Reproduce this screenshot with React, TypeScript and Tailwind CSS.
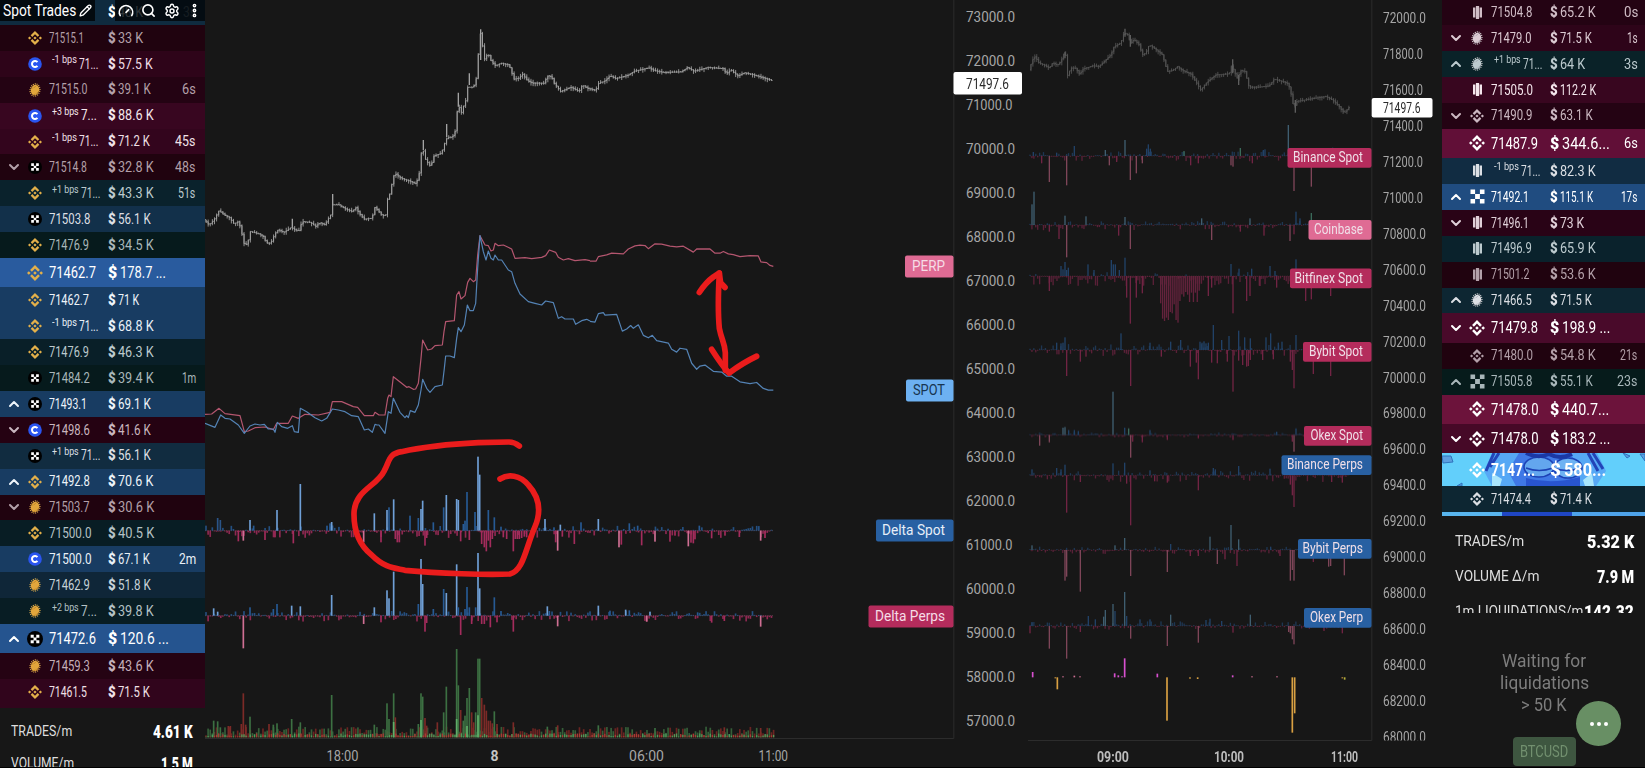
import { useLayoutEffect, useRef } from 'react';
import { ChevronDown, ChevronUp, EllipsisVertical, Gauge, Pencil, Search, Settings } from 'lucide-react';
import { SiBinance } from 'react-icons/si';

type Exchange = 'binance' | 'coinbase' | 'bitfinex' | 'okx' | 'bybit';
type Size = 'sm' | 'md' | 'xl';

interface Trade {
  ex: Exchange;
  price: string;
  amount: string;
  bg: string;
  tone?: string;
  bps?: string;
  time?: string;
  dir?: 'up' | 'down';
  size?: Size;
}

// [x, height, tone]
type Bar = [number, number, string?];

const FONT = 'Roboto, "Open Sans", sans-serif';

const ADVANCE: Record<string, number> = { '1': 4, '7': 6, '0': 7.6, '.': 3.2, ' ': 3.2, K: 8, s: 6.6, m: 10.5 };
const measure = (text: string) => [...text].reduce((sum, c) => sum + (ADVANCE[c] ?? 7), 0);

function Fit({ text, w, className = '' }: { text: string; w: number; className?: string }) {
  const ref = useRef<HTMLSpanElement>(null);

  useLayoutEffect(() => {
    const el = ref.current;
    if (el) el.style.transform = `scaleX(${w / el.offsetWidth})`;
  }, [text, w]);

  return (
    <span className={`inline-block shrink-0 ${className}`} style={{ width: w }}>
      <span ref={ref} className="inline-block origin-left whitespace-nowrap">
        {text}
      </span>
    </span>
  );
}

function ExchangeIcon({ ex, mono, big }: { ex: Exchange; mono: boolean; big: boolean }) {
  const size = big ? 16 : 14;
  if (ex === 'binance') return <SiBinance size={size} color={mono ? 'currentColor' : '#e3b04a'} />;
  if (ex === 'coinbase') {
    return (
      <svg width="14" height="14" viewBox="0 0 14 14">
        <circle cx="7" cy="7" r="6.8" fill="#2a55f0" />
        <path d="M9.4 5.2A3 3 0 1 0 9.4 8.8" fill="none" stroke="#fff" strokeWidth="2" />
      </svg>
    );
  }
  if (ex === 'bybit') {
    return (
      <svg width="11" height="15" viewBox="0 0 11 15" fill="currentColor">
        <rect x="1" y="2.5" width="2.4" height="10" />
        <rect x="3.9" y="1" width="3.2" height="13" />
        <rect x="7.6" y="2.5" width="2.4" height="10" />
      </svg>
    );
  }
  if (ex === 'bitfinex') {
    return (
      <svg width="12" height="14" viewBox="0 0 12 14">
        <ellipse cx="6" cy="7" rx="4.2" ry="5.4" transform="rotate(12 6 7)" fill={mono ? 'currentColor' : '#e2a63c'} />
        <ellipse cx="6" cy="7" rx="4.9" ry="6.2" transform="rotate(12 6 7)" fill="none" stroke={mono ? '#d8d8d8' : '#e8b552'} strokeWidth="1.1" strokeDasharray="1 1" />
        <path d="M1.8 5.2C4 5.4 6.5 4 8 2" fill="none" stroke={mono ? '#8d8d98' : '#a06c1c'} strokeWidth=".6" strokeDasharray="1 .6" />
        <path d="M3.6 12C6.5 11.4 9 9.6 10.4 7.4" fill="none" stroke={mono ? '#8d8d98' : '#a06c1c'} strokeWidth=".7" strokeDasharray="1 .6" />
      </svg>
    );
  }
  return mono ? (
    <svg width="15" height="15" viewBox="0 0 15 15" fill="currentColor">
      <path d="M.5.5h4.6v4.6H.5zM9.9.5h4.6v4.6H9.9zM5.1 5.1h4.8v4.8H5.1zM.5 9.9h4.6v4.6H.5zM9.9 9.9h4.6v4.6H9.9z" />
    </svg>
  ) : (
    <svg width={size} height={size} viewBox="0 0 14 14">
      <circle cx="7" cy="7" r="7" fill="#000" />
      <path d="M3.2 3.2h2.7v2.7H3.2zM8.1 3.2h2.7v2.7H8.1zM5.7 5.7h2.6v2.6H5.7zM3.2 8.1h2.7v2.7H3.2zM8.1 8.1h2.7v2.7H8.1z" fill="#fff" />
    </svg>
  );
}

const rowStyles: Record<Size, string> = {
  sm: 'h-[25.9px] text-[15px]',
  md: 'h-[29.4px] text-[17px]',
  xl: 'h-[33px] text-[19px] font-bold',
};
const scales: Record<Size, number> = { sm: 1, md: 1.17, xl: 1.35 };

// blue cartoon strip shown behind very large trades
function WhaleArt() {
  return (
    <svg className="absolute inset-0" width="203" height="33" viewBox="0 0 203 33" preserveAspectRatio="none">
      <rect width="203" height="33" fill="#62cffb" />
      <path d="M50 0L42 18L50 33H154L164 18L155 0Z" fill="#56a8f5" />
      <path d="M52 0L44 18M57 0L48 14M151 0L161 16M146 0L156 18" stroke="#2244b8" strokeWidth="3" />
      <path d="M77 0H128L140 18L134 33H74L66 18Z" fill="#3f78e6" />
      <path d="M50 20L60 26L58 33H50ZM150 20L141 27L143 33H152Z" fill="#a9e6fc" />
      <ellipse cx="97" cy="14" rx="15" ry="10" fill="#63a6ee" stroke="#1c41b5" strokeWidth="1.6" />
      <ellipse cx="126" cy="15" rx="14" ry="10" fill="#6db2f3" stroke="#1c41b5" strokeWidth="1.6" />
      <path d="M84 15Q97 20 111 15Q125 20 139 15" fill="none" stroke="#1c41b5" strokeWidth="1.5" />
      <path d="M84 0Q96 6 107 1Q118 7 130 1" fill="none" stroke="#1b38a5" strokeWidth="4" />
      <path d="M84 25Q110 32 138 24V33H84Z" fill="#2855d0" />
      <path d="M0 3H9L11 9L1 10ZM15 33L20 30V33ZM181 0L188 3L185 5ZM198 1H203V8Z" fill="#5b9fe0" stroke="#2f74bd" strokeWidth="1" />
    </svg>
  );
}

function TradeRow({ trade, mono }: { trade: Trade; mono: boolean }) {
  const size = trade.size ?? 'sm';
  const k = scales[size];
  return (
    <div className={`relative flex shrink-0 items-center pl-2 ${rowStyles[size]} ${trade.bg} ${trade.tone ?? 'text-[#dcdfe4]'}`}>
      {size === 'xl' && <WhaleArt />}
      <div className="relative flex w-full items-center">
        <div className="mr-0.5 flex w-[11px] justify-center">
          {trade.dir === 'up' && <ChevronUp size={16} strokeWidth={3} className="shrink-0" />}
          {trade.dir === 'down' && <ChevronDown size={16} strokeWidth={3} className="shrink-0" />}
        </div>
        <div className="flex w-7 justify-center">
          <ExchangeIcon ex={trade.ex} mono={mono} big={size !== 'sm'} />
        </div>
        <div className="flex w-[59px] items-center">
          {trade.bps && (
            <Fit text={trade.bps} w={trade.bps[0] === '-' ? 25 : 26.5} className="mr-0.5 ml-[3px] -translate-y-[4px] text-[11px] leading-none" />
          )}
          <Fit text={trade.price} w={measure(trade.price) * k} />
        </div>
        <Fit text="$" w={8 * k} className={size === 'sm' ? 'mr-0.5 font-black' : 'mr-[3px] font-black'} />
        <Fit text={trade.amount} w={measure(trade.amount) * k} />
        {trade.time && (
          <div className={`flex flex-1 justify-end ${mono ? 'pr-[7px]' : 'pr-[9px]'}`}>
            <Fit text={trade.time} w={measure(trade.time)} className="text-[15px]" />
          </div>
        )}
      </div>
    </div>
  );
}

const DIM_RED = 'bg-[#20030f]';
const RED = 'bg-[#2e0419]';
const DIM_TEAL = 'bg-[#061a1c]';
const TEAL = 'bg-[#0a222c]';
const NAVY = 'bg-[#12304a]';
const BLUE = 'bg-[#183c62]';
const FADED_RED = 'text-[#b3a0a9]';
const FADED = 'text-[#a9b7ba]';
const WHITE = 'text-white';

const spotTrades: Trade[] = [
  { ex: 'binance', price: '71515.1', amount: '33 K', bg: DIM_RED, tone: FADED_RED },
  { ex: 'coinbase', price: '71...', bps: '-1 bps', amount: '57.5 K', bg: RED, tone: 'text-[#eedde5]' },
  { ex: 'bitfinex', price: '71515.0', amount: '39.1 K', time: '6s', bg: 'bg-[#240313]', tone: FADED_RED },
  { ex: 'coinbase', price: '7...', bps: '+3 bps', amount: '88.6 K', bg: 'bg-[#380620]', tone: 'text-[#f4e6ec]' },
  { ex: 'binance', price: '71...', bps: '-1 bps', amount: '71.2 K', time: '45s', bg: 'bg-[#33051d]', tone: 'text-[#f0e0e7]' },
  { ex: 'okx', price: '71514.8', amount: '32.8 K', time: '48s', dir: 'down', bg: DIM_RED, tone: FADED_RED },
  { ex: 'binance', price: '71...', bps: '+1 bps', amount: '43.3 K', time: '51s', bg: TEAL, tone: 'text-[#bccace]' },
  { ex: 'okx', price: '71503.8', amount: '56.1 K', bg: NAVY },
  { ex: 'binance', price: '71476.9', amount: '34.5 K', bg: DIM_TEAL, tone: FADED },
  { ex: 'binance', price: '71462.7', amount: '178.7 ...', bg: 'bg-[#295b9e]', tone: WHITE, size: 'md' },
  { ex: 'binance', price: '71462.7', amount: '71 K', bg: BLUE, tone: 'text-[#eef4fa]' },
  { ex: 'binance', price: '71...', bps: '-1 bps', amount: '68.8 K', bg: BLUE, tone: 'text-[#e8f0f7]' },
  { ex: 'binance', price: '71476.9', amount: '46.3 K', bg: 'bg-[#091f28]', tone: 'text-[#bccace]' },
  { ex: 'okx', price: '71484.2', amount: '39.4 K', time: '1m', bg: DIM_TEAL, tone: FADED },
  { ex: 'okx', price: '71493.1', amount: '69.1 K', dir: 'up', bg: BLUE, tone: 'text-[#eef4fa]' },
  { ex: 'coinbase', price: '71498.6', amount: '41.6 K', dir: 'down', bg: 'bg-[#250212]', tone: 'text-[#c9b6bf]' },
  { ex: 'okx', price: '71...', bps: '+1 bps', amount: '56.1 K', bg: 'bg-[#112c40]' },
  { ex: 'binance', price: '71492.8', amount: '70.6 K', dir: 'up', bg: BLUE, tone: 'text-[#eef4fa]' },
  { ex: 'bitfinex', price: '71503.7', amount: '30.6 K', dir: 'down', bg: DIM_RED, tone: FADED_RED },
  { ex: 'binance', price: '71500.0', amount: '40.5 K', bg: 'bg-[#081d24]', tone: 'text-[#b4c1c5]' },
  { ex: 'coinbase', price: '71500.0', amount: '67.1 K', time: '2m', bg: BLUE, tone: 'text-[#e8f0f7]' },
  { ex: 'bitfinex', price: '71462.9', amount: '51.8 K', bg: 'bg-[#0f2638]', tone: 'text-[#c7d2d9]' },
  { ex: 'bitfinex', price: '7...', bps: '+2 bps', amount: '39.8 K', bg: 'bg-[#081d24]', tone: 'text-[#b4c1c5]' },
  { ex: 'okx', price: '71472.6', amount: '120.6 ...', dir: 'up', bg: 'bg-[#25548f]', tone: WHITE, size: 'md' },
  { ex: 'bitfinex', price: '71459.3', amount: '43.6 K', bg: 'bg-[#250313]', tone: 'text-[#c4b0ba]' },
  { ex: 'binance', price: '71461.5', amount: '71.5 K', bg: 'bg-[#31051c]', tone: 'text-[#f0e0e7]' },
];

const perpTrades: Trade[] = [
  { ex: 'bybit', price: '71504.8', amount: '65.2 K', time: '0s', bg: 'bg-[#240313]', tone: 'text-[#d0bdc6]' },
  { ex: 'bitfinex', price: '71479.0', amount: '71.5 K', time: '1s', dir: 'down', bg: RED, tone: 'text-[#dccbd3]' },
  { ex: 'bitfinex', price: '71...', bps: '+1 bps', amount: '64 K', time: '3s', dir: 'up', bg: 'bg-[#0a2228]', tone: 'text-[#bccace]' },
  { ex: 'bybit', price: '71505.0', amount: '112.2 K', bg: 'bg-[#38061f]', tone: 'text-[#f4e6ec]' },
  { ex: 'binance', price: '71490.9', amount: '63.1 K', dir: 'down', bg: 'bg-[#240313]', tone: 'text-[#cbb8c1]' },
  { ex: 'binance', price: '71487.9', amount: '344.6...', time: '6s', bg: 'bg-[#610f37]', tone: WHITE, size: 'md' },
  { ex: 'bybit', price: '71...', bps: '-1 bps', amount: '82.3 K', bg: 'bg-[#112c42]' },
  { ex: 'okx', price: '71492.1', amount: '115.1 K', time: '17s', dir: 'up', bg: 'bg-[#204c80]', tone: WHITE },
  { ex: 'bybit', price: '71496.1', amount: '73 K', dir: 'down', bg: 'bg-[#290316]', tone: 'text-[#e0d0d8]' },
  { ex: 'bybit', price: '71496.9', amount: '65.9 K', bg: TEAL, tone: 'text-[#bccace]' },
  { ex: 'bybit', price: '71501.2', amount: '53.6 K', bg: DIM_RED, tone: FADED_RED },
  { ex: 'bitfinex', price: '71466.5', amount: '71.5 K', dir: 'up', bg: 'bg-[#0d2632]' },
  { ex: 'binance', price: '71479.8', amount: '198.9 ...', dir: 'down', bg: 'bg-[#490a2a]', tone: WHITE, size: 'md' },
  { ex: 'binance', price: '71480.0', amount: '54.8 K', time: '21s', bg: DIM_RED, tone: FADED_RED },
  { ex: 'okx', price: '71505.8', amount: '55.1 K', time: '23s', dir: 'up', bg: 'bg-[#061b1b]', tone: FADED },
  { ex: 'binance', price: '71478.0', amount: '440.7...', bg: 'bg-[#6c133b]', tone: WHITE, size: 'md' },
  { ex: 'binance', price: '71478.0', amount: '183.2 ...', dir: 'down', bg: 'bg-[#460927]', tone: WHITE, size: 'md' },
  { ex: 'binance', price: '7147...', amount: '580...', bg: 'bg-[#62cffb]', tone: WHITE, size: 'xl' },
  { ex: 'binance', price: '71474.4', amount: '71.4 K', bg: 'bg-[#0d2632]' },
];

// deterministic noise for the small bars and candle wicks
function noise(seed: number) {
  let s = seed;
  return () => {
    s = (s * 16807) % 2147483647;
    return s / 2147483647;
  };
}

function Bars({ bars, base, width = 5, opacity = 1 }: { bars: Bar[]; base: number; width?: number; opacity?: number }) {
  return (
    <g opacity={opacity}>
      {bars.map(([x, h, color], i) => (
        <rect key={i} x={x - width / 2} y={h > 0 ? base - h : base} width={width} height={Math.abs(h)} fill={color ?? (h > 0 ? '#275a94' : '#a32c5c')} />
      ))}
    </g>
  );
}

function smallBars(from: number, to: number, step: number, seed: number, up: number, down: number, bias = 0.5): Bar[] {
  const rnd = noise(seed);
  const out: Bar[] = [];
  for (let x = from; x <= to; x += step) {
    const r = rnd();
    const h = Math.pow(rnd(), 2.2);
    out.push(r < bias ? [x, 2 + h * up] : [x, -2 - h * down]);
  }
  return out;
}

function Candles({ points, step, color, seed, spread }: { points: number[][]; step: number; color: string; seed: number; spread: number }) {
  const rnd = noise(seed);
  const at = (x: number) => {
    const i = Math.max(1, points.findIndex((p) => p[0] >= x));
    const [x0, y0] = points[i - 1];
    const [x1, y1] = points[i];
    return y0 + ((x - x0) / (x1 - x0)) * (y1 - y0);
  };
  let wicks = '';
  let bodies = '';
  const end = points[points.length - 1][0];
  for (let x = points[0][0]; x + step <= end; x += step) {
    const open = at(x);
    const close = at(x + step);
    const hi = Math.min(open, close) - rnd() * spread;
    const lo = Math.max(open, close) + rnd() * spread;
    wicks += `M${x + step / 2} ${hi}V${lo}`;
    bodies += `M${x} ${open - 1}H${x + step / 2}V${close}H${x + step}`;
  }
  return <path d={wicks + bodies} fill="none" stroke={color} strokeWidth="2.6" />;
}

function Tag({ x, y, right, h, text, w, size, fill, color = '#f6dce6' }: { x: number; y: number; right: number; h: number; text: string; w: number; size: number; fill: string; color?: string }) {
  return (
    <g>
      <rect x={x} y={y} width={right - x} height={h} rx="2" fill={fill} />
      <text x={right - 8.5 - w} y={y + h / 2 + size * 0.31} fontSize={size} textLength={w} lengthAdjust="spacingAndGlyphs" fill={color}>
        {text}
      </text>
    </g>
  );
}

const LIGHT = '#6f9fd6';
const PINK = '#cf6f93';
const DARK_BLUE = '#2a5488';

const pricePoints = [
  [0, 660], [15, 675], [30, 660], [45, 632], [60, 645], [75, 652], [90, 672], [103, 665], [112, 690], [118, 730], [130, 735], [138, 695],
  [165, 702], [178, 710], [187, 730], [200, 730], [210, 708], [220, 690], [240, 697], [262, 682], [275, 692], [287, 692], [293, 665],
  [320, 668], [335, 680], [345, 668], [362, 675], [380, 645], [385, 615], [405, 615], [425, 628], [445, 635], [455, 622], [465, 640],
  [480, 658], [505, 655], [510, 620], [520, 630], [535, 648], [545, 645], [550, 600], [560, 575], [567, 530], [575, 522], [590, 535],
  [615, 543], [635, 552], [645, 528], [650, 465], [657, 448], [665, 480], [680, 500], [690, 468], [712, 460], [722, 430], [730, 412],
  [745, 412], [755, 390], [758, 340], [765, 318], [770, 345], [778, 320], [788, 295], [792, 255], [800, 265], [812, 255], [818, 230],
  [822, 180], [827, 88], [835, 135], [842, 178], [852, 160], [862, 185], [875, 198], [890, 190], [915, 195], [930, 238], [945, 235],
  [955, 222], [970, 242], [985, 250], [1020, 250], [1030, 228], [1042, 230], [1050, 250], [1070, 275], [1100, 262], [1125, 275],
  [1135, 255], [1150, 265], [1175, 272], [1185, 248], [1200, 245], [1218, 228], [1235, 236], [1272, 226], [1290, 214], [1335, 204], [1350, 212], [1380, 218], [1431, 216],
  [1450, 203], [1470, 214], [1510, 203], [1557, 206], [1567, 222], [1580, 210], [1602, 228], [1620, 219], [1645, 224], [1704, 242],
];

const PERP_A =
  '0,568 20,567 42,550 60,566 105,572 118,620 130,618 150,608 180,606 205,614 215,595 250,595 262,573 280,580 300,568 340,570 375,562 382,530 410,530 445,545 458,547 478,572 505,572 510,562 522,570 540,570 548,520 552,510 558,515 565,455 590,475 605,487 612,485 625,493 632,492 640,475 648,400 653,345 668,375 680,372 690,362 712,360 717,320 722,290 748,287 755,210 762,200 768,222 780,212 788,172 795,160 805,170 812,165 818,90 825,32 840,60 850,62 858,78 865,75 870,55 880,62 895,60 920,72 930,100 960,98 980,101 1010,97 1022,92 1033,75 1052,82 1060,97 1075,105 1090,101 1110,107 1140,104 1155,107';
const PERP_B =
  '0,118 18,118 25,105 50,100 65,95 100,97 115,83 135,74 150,72 165,73 175,82 195,68 215,69 240,75 260,77 280,75 310,92 320,83 360,83 375,95 390,95 400,90 415,97 430,99 450,105 480,102 505,103 513,120 530,122 540,130 550,133';
const SPOT_A =
  '0,595 30,607 47,570 60,580 75,582 100,600 118,625 135,603 150,597 165,600 178,598 190,612 205,612 210,622 217,592 230,605 248,610 262,602 268,620 280,622 286,550 305,560 330,578 350,588 365,580 382,552 400,555 420,560 440,572 460,575 478,615 490,612 502,622 510,598 516,600 522,600 540,625 550,560 558,565 565,520 585,562 600,578 605,572 610,578 616,557 630,562 640,540 648,495 653,463 665,490 675,502 690,485 712,480 718,430 722,393 735,393 748,398 755,340 760,308 768,320 778,300 787,240 795,257 805,257 812,235 818,130 825,32 835,80 843,105 850,78 858,100 865,105 870,90 880,105 890,105 910,135 920,140 930,175 945,207 970,230 990,235 1010,240 1022,228 1045,233 1060,280 1070,275 1080,282 1105,282 1112,298 1130,287 1145,283 1155,288';
const SPOT_B =
  '0,290 15,292 25,268 40,265 45,272 80,270 97,318 110,312 122,302 130,310 145,300 160,330 175,337 187,330 200,345 235,352 245,370 260,378 270,367 290,370 305,410 320,427 330,418 345,415 370,433 395,435 410,447 425,447 450,463 480,468 500,465 520,482 535,487 550,487';

const deltaSpot: Bar[] = [
  [38, 38, DARK_BLUE], [46, 32, DARK_BLUE], [135, 32, LIGHT], [146, 15], [216, 62, LIGHT], [286, 140, LIGHT], [366, 15], [375, 22], [380, 26, LIGHT],
  [508, 52, LIGHT], [546, 62, LIGHT], [552, 70], [566, 94, LIGHT], [615, 45], [640, 38], [648, 65, LIGHT], [653, 90, LIGHT], [685, 25], [716, 70],
  [724, 107, LIGHT], [755, 95, LIGHT], [760, 92, LIGHT], [775, 20], [780, 30], [786, 116], [810, 56], [819, 222, LIGHT], [824, 168, LIGHT], [850, 62],
  [868, 40], [888, 12], [1020, 35, LIGHT], [1047, 10], [1066, 18, LIGHT], [1128, 25], [1180, 35, LIGHT], [1273, 22], [1298, 15], [1483, 15],
  [100, -32], [115, -30, PINK], [180, -28], [210, -20], [265, -38], [476, -35, PINK], [528, -35], [571, -25], [577, -35], [583, -35], [660, -45],
  [665, -22], [767, -32], [793, -28], [830, -40], [838, -50], [844, -62], [850, -30], [856, -50], [862, -25], [895, -20], [905, -25], [925, -62],
  [931, -25], [937, -25], [943, -25], [950, -22], [958, -18], [965, -20], [1052, -35], [1058, -60, PINK], [1072, -18], [1108, -40], [1242, -50, PINK],
  [1249, -42], [1310, -44], [1350, -33, PINK], [1395, -33], [1410, -15], [1450, -47, PINK], [1458, -36], [1465, -38], [1470, -26], [1520, -23],
  [1560, -15], [1603, -19], [1667, -30, PINK], [1680, -22],
];
const deltaPerps: Bar[] = [
  [26, 22, LIGHT], [38, 12, LIGHT], [135, 25], [205, 20], [216, 35], [260, 30, LIGHT], [286, 28, LIGHT], [380, 62, LIGHT], [508, 25, LIGHT],
  [546, 76, LIGHT], [552, 52, LIGHT], [566, 132, LIGHT], [640, 35], [648, 170, LIGHT], [653, 95, LIGHT], [685, 20], [716, 80], [724, 68, LIGHT],
  [755, 154, LIGHT], [760, 25], [780, 20], [786, 86], [793, 25], [812, 25], [819, 188, LIGHT], [824, 82, LIGHT], [868, 55], [888, 14],
  [1027, 28, LIGHT], [1033, 14], [1180, 30, LIGHT], [1215, 15], [1262, 18, LIGHT], [1273, 16], [1335, 12, LIGHT], [1478, 10],
  [115, -98, PINK], [476, -25, PINK], [528, -20], [660, -48], [665, -22], [767, -58], [800, -25], [830, -25], [838, -25], [856, -35], [876, -20],
  [925, -48], [1058, -32, PINK], [1325, -18, PINK], [1520, -21], [1558, -16], [1667, -33, PINK],
];
const GREEN = '#3c7042';
const BRICK = '#7c2a27';
const volume: Bar[] = [
  [26, 50, GREEN], [38, 48, GREEN], [46, 30, GREEN], [135, 62, GREEN], [205, 38, GREEN], [216, 42, GREEN], [260, 55, GREEN], [286, 45, GREEN],
  [380, 127, GREEN], [508, 38, GREEN], [546, 102, GREEN], [552, 55, GREEN], [566, 132, GREEN], [640, 40, GREEN], [648, 132, GREEN], [653, 122, GREEN],
  [716, 75, GREEN], [724, 152, GREEN], [755, 265, GREEN], [760, 156, GREEN], [775, 50, GREEN], [780, 65, GREEN], [786, 118, GREEN], [793, 148, GREEN],
  [812, 75, GREEN], [819, 236, GREEN], [824, 236, GREEN], [868, 78, GREEN], [1027, 32, GREEN], [1180, 36, GREEN], [1350, 28, GREEN],
  [70, 34, BRICK], [76, 34, BRICK], [109, 40, BRICK], [115, 132, BRICK], [122, 38, BRICK], [192, 40, BRICK], [571, 60, BRICK], [660, 58, BRICK],
  [665, 35, BRICK], [697, 45, BRICK], [767, 82, BRICK], [800, 75, BRICK], [806, 45, BRICK], [830, 118, BRICK], [838, 98, BRICK], [844, 80, BRICK],
  [850, 50, BRICK], [856, 50, BRICK], [862, 42, BRICK], [876, 40, BRICK], [925, 45, BRICK], [1058, 36, BRICK], [1558, 30, BRICK], [1667, 28, BRICK],
];

function volumeNoise(seed: number, min: number, range: number, colors: string[]): Bar[] {
  const rnd = noise(seed);
  const out: Bar[] = [];
  for (let x = 3; x < 1706; x += 6.33) out.push([x, min + rnd() * range, colors[rnd() > 0.5 ? 0 : 1]]);
  return out;
}

// Geometry below is kept in thirds of a pixel, hence the scale on the groups
function MainChart() {
  const prices = Array.from({ length: 17 }, (_, i) => 73000 - i * 1000);
  return (
    <svg width="815" height="768" viewBox="0 0 815 768" className="shrink-0" fontFamily={FONT}>
      <g transform="scale(.33333)">
        <Candles points={pricePoints} step={6.33} color="#a3a3a3" seed={17} spread={9} />
        <path d="M827 88V180M655 420V450M725 372V412M760 278V320M793 220V255M383 582V615M262 656V682" stroke="#a3a3a3" strokeWidth="4" />
        <g transform="translate(0 675)" fill="none" strokeWidth="3.6" strokeLinejoin="round">
          <polyline points={PERP_A} stroke="#b4566f" />
          <polyline points={SPOT_A} stroke="#5483b5" />
        </g>
        <g transform="translate(1155 660) scale(1 1.0484)" fill="none" strokeWidth="3.6" strokeLinejoin="round">
          <polyline points={PERP_B} stroke="#b4566f" />
          <polyline points={SPOT_B} stroke="#5483b5" />
        </g>
        <g transform="translate(0 1320)">
          <path d="M0 272H1704M0 527H1704" stroke="#6b5560" strokeWidth="2" strokeDasharray="4 3" />
          <Bars base={272} bars={smallBars(3, 1704, 6.33, 91, 14, 20, 0.42)} opacity={0.85} />
          <Bars base={272} bars={deltaSpot} />
          <Bars base={527} bars={smallBars(3, 1704, 6.33, 37, 12, 16, 0.45)} opacity={0.85} />
          <Bars base={527} bars={deltaPerps} />
          <Bars base={892} bars={volumeNoise(5, 6, 26, ['#6b2422', '#355f39'])} />
          <Bars base={892} bars={volume} />
          <Bars base={892} bars={volumeNoise(77, 2, 10, ['#a83a34', '#4f9a5a'])} width={4} />
          <path d="M819 892v-66M566 892v-46M648 892v-52M755 892v-55M786 892v-34" stroke="#5fae68" strokeWidth="5" />
          <path
            d="M943 18Q928 6 912 6L820 8C740 12 640 24 590 35C550 42 555 60 538 92C515 140 449 150 447 220C446 290 475 325 500 345C540 385 570 384 600 391C700 401 850 405 915 402C955 392 960 330 990 260C1010 212 1002 170 970 135C945 105 910 101 885 117"
            fill="none" stroke="#ea1c1c" strokeWidth="17" strokeLinecap="round" strokeLinejoin="round"
          />
        </g>
        <g transform="translate(1155 660) scale(1 1.0484)" fill="none" stroke="#ea1c1c" strokeWidth="17" strokeLinecap="round" strokeLinejoin="round">
          <path d="M388 152C384 220 385 280 388 310C395 345 404 350 406 380V430" />
          <path d="M328 207Q348 178 370 163L388 152L392 180L405 193" />
          <path d="M365 370Q395 415 417 438Q460 408 500 390" />
        </g>
      </g>
      <path d="M0 738.5H748.8V0" fill="none" stroke="#2c2c2c" />
      <Tag x={700} y={255.5} right={748.5} h={22} text="PERP" w={33} size={15.5} fill="#df6b94" />
      <Tag x={701} y={379.5} right={748.5} h={22} text="SPOT" w={32} size={15.5} fill="#6db1f2" color="#17344f" />
      <Tag x={671} y={519.5} right={748.5} h={22} text="Delta Spot" w={63} size={15.5} fill="#2860a2" color="#e6eef8" />
      <Tag x={663.5} y={605.5} right={748.5} h={22} text="Delta Perps" w={70} size={15.5} fill="#b42c5c" />
      <g fontSize="15.5" fill="#a6a6a6">
        {prices.map((p, i) => (
          <text key={p} x="761" y={22.4 + i * 43.98} textLength={p === 71000 || p === 61000 ? 46.5 : 49} lengthAdjust="spacingAndGlyphs">
            {p.toFixed(1)}
          </text>
        ))}
        <text x="121.5" y="760.5" textLength="32" lengthAdjust="spacingAndGlyphs">18:00</text>
        <text x="285.5" y="760.5" textLength="8" lengthAdjust="spacingAndGlyphs" fontWeight="700" fill="#c4c4c4">8</text>
        <text x="424" y="760.5" textLength="35" lengthAdjust="spacingAndGlyphs">06:00</text>
        <text x="553.5" y="760.5" textLength="29.5" lengthAdjust="spacingAndGlyphs">11:00</text>
      </g>
    </svg>
  );
}

const minutePoints = [
  [240, 210], [250, 180], [258, 170], [270, 190], [285, 195], [300, 205], [310, 190], [325, 195], [335, 185], [345, 160], [352, 170], [354, 230],
  [365, 205], [380, 205], [392, 225], [400, 208], [430, 198], [450, 200], [470, 180], [485, 165], [495, 140], [515, 130], [525, 98], [535, 105],
  [545, 130], [555, 118], [570, 135], [580, 165], [590, 160], [600, 135], [615, 145], [640, 165], [655, 215], [670, 212], [685, 200], [700, 212],
  [725, 222], [740, 245], [755, 270], [775, 245], [800, 225], [840, 222], [848, 195], [855, 215], [865, 235], [875, 212], [888, 215], [900, 262],
  [930, 262], [960, 258], [975, 238], [1000, 245], [1018, 252], [1028, 290], [1035, 330], [1040, 305], [1080, 298], [1130, 290], [1150, 300],
  [1170, 320], [1185, 340], [1200, 322],
];

const L = '#5686a3';
const P = '#b8607e';
const G = '#4f9a80';

const bitfinexSell: Bar[] = Array.from({ length: 21 }, (_, i) => {
  const x = 632 + i * 5.78;
  const depth = i < 10 ? [82, 128, 135, 125, 132, 108, 112, 85, 132, 140][i] : [75, 55, 62, 48, 56, 78, 50, 78, 50, 78, 44][i - 10];
  return [x, -depth, '#8f2a52'];
});

const series: { shift: number; lift: number; base: number; up: number; down: number; bias: number; bars: Bar[] }[] = [
  {
    shift: -210, lift: 0, base: 468, up: 12, down: 14, bias: 0.5,
    bars: [[250, 12], [320, 10], [373, 30], [466, 18, L], [525, 48, L], [590, 22], [595, 35], [601, 22], [702, 15, G], [871, 24, G], [940, 18], [945, 20], [1015, 93, L], [1148, 25], [275, -22], [298, -78, P], [350, -88, P], [478, -28, P], [500, -18], [541, -72, P], [559, -52, P], [577, -22, P], [722, -28], [745, -22], [843, -28, P], [849, -32, P], [907, -22], [1032, -105, P], [1084, -92, P]],
  },
  {
    shift: -210, lift: 0, base: 675, up: 10, down: 14, bias: 0.5,
    bars: [[246, 62, L], [252, 100, L], [345, 28, L], [408, 26, L], [525, 24, L], [755, 20, L], [900, 20, L], [1038, 40], [1050, 20], [1084, 36, G], [298, -20], [327, -42], [350, -97, P], [506, -32], [541, -72, P], [785, -45, P], [871, -20], [942, -32], [1020, -48, P], [1032, -28]],
  },
  {
    shift: -210, lift: 0, base: 828, up: 12, down: 30, bias: 0.12,
    bars: [[333, 30], [339, 20], [345, 42], [350, 18], [355, 25], [414, 35], [432, 18], [484, 48], [490, 35], [496, 35], [508, 18], [525, 55], [843, 36], [867, 22], [905, 22], [960, 30], [975, 15], [1038, 50], [298, -45], [530, -65], [541, -143], [559, -65], [577, -52], [775, -60], [785, -35], [849, -112], [890, -75], [900, -60], [930, -30], [980, -35], [1067, -75], [1084, -70], [1142, -60], ...bitfinexSell],
  },
  {
    shift: 0, lift: 960, base: 90, up: 16, down: 16, bias: 0.55,
    bars: [[110, 22], [123, 20], [129, 22], [135, 38], [303, 50], [390, 22], [452, 25], [482, 30], [540, 25], [546, 22], [552, 26], [558, 20], [565, 22], [580, 75], [605, 30], [627, 42], [656, 58], [674, 38], [691, 35], [738, 38], [752, 50], [775, 22], [786, 25], [828, 45], [140, -78], [181, -35], [198, -20], [332, -108], [424, -20], [511, -50], [529, -38], [535, -88], [575, -38], [592, -40], [622, -35], [639, -125], [656, -32], [668, -45], [680, -50], [685, -48], [691, -30], [728, -30], [760, -28], [811, -35], [817, -60], [822, -115], [880, -72], [932, -78]],
  },
  {
    shift: 0, lift: 960, base: 345, up: 6, down: 6, bias: 0.5,
    bars: [[129, 22, L], [135, 24, L], [146, 15], [163, 15], [175, 12], [279, 130, L], [314, 22], [326, 20, G], [390, 15], [770, 10], [828, 20], [59, -32, P], [88, -22, P], [332, -68, P], [338, -20], [367, -22], [442, -15], [535, -10], [639, -15], [817, -20], [822, -50, P]],
  },
  {
    shift: 0, lift: 960, base: 466, up: 12, down: 18, bias: 0.45,
    bars: [[36, 18], [110, 22], [123, 18], [135, 32], [279, 36], [314, 38], [390, 15], [580, 22], [586, 18], [656, 28], [750, 20], [140, -112], [181, -20], [320, -25], [332, -150], [404, -18], [442, -22], [535, -45], [811, -28], [817, -60], [822, -95], [935, -20], [967, -22]],
  },
  {
    shift: 0, lift: 960, base: 690, up: 8, down: 10, bias: 0.5,
    bars: [[36, 14, L], [285, 14, L], [314, 36, L], [452, 18], [570, 40, L], [633, 75, L], [656, 32, L], [752, 10], [135, -92, P], [140, -80, P], [181, -125, P], [332, -78, P], [442, -66, P], [511, -18], [535, -18], [592, -42, P], [615, -28], [651, -48], [780, -18], [811, -92, P], [817, -60, P], [822, -92, P], [880, -36], [926, -50, P], [932, -48, P], [973, -76, P]],
  },
  {
    shift: 0, lift: 960, base: 918, up: 12, down: 10, bias: 0.55,
    bars: [[36, 12], [205, 30], [226, 20], [251, 28, L], [256, 48, L], [279, 66, L], [285, 45], [314, 102, L], [320, 30], [360, 20], [390, 20], [452, 34, L], [558, 18], [570, 22], [605, 15], [691, 34, L], [30, -22], [88, -68, P], [140, -98, P], [181, -18], [332, -38, P], [442, -60, P], [535, -50, P], [639, -20], [806, -18, P], [811, -22, P], [817, -40, P], [822, -55, P], [912, -15], [967, -22]],
  },
];

const MAGENTA = '#d850d0';
const ORANGE = '#d9a042';
const liquidations: Bar[] = [
  [38, 16, MAGENTA], [284, 12, MAGENTA], [295, 6, MAGENTA], [306, 3, MAGENTA], [314, 57, MAGENTA], [412, 11, MAGENTA], [638, 6, MAGENTA], [163, 5, PINK], [180, 3, PINK], [129, 3, PINK],
  [696, 3, PINK], [771, 3, PINK], [106, -3, ORANGE], [112, -36, ORANGE], [441, -130, ORANGE], [510, -4, ORANGE], [533, -5, ORANGE], [817, -166, ORANGE], [824, -108, ORANGE], [967, -3, ORANGE], [974, -7, '#b8b13a'],
];

const exchangeTags = [
  { x: 267.5, y: 148, text: 'Binance Spot', w: 70, fill: '#b42c5c' },
  { x: 288.5, y: 220, text: 'Coinbase', w: 49, fill: '#df6b94' },
  { x: 270, y: 268.5, text: 'Bitfinex Spot', w: 68.5, fill: '#b42c5c' },
  { x: 283, y: 342, text: 'Bybit Spot', w: 54, fill: '#b42c5c' },
  { x: 284, y: 426, text: 'Okex Spot', w: 52.5, fill: '#b42c5c' },
  { x: 261.5, y: 455.3, text: 'Binance Perps', w: 76, fill: '#2860a2' },
  { x: 278, y: 539, text: 'Bybit Perps', w: 60.5, fill: '#2860a2' },
  { x: 284, y: 608, text: 'Okex Perp', w: 53, fill: '#2860a2' },
];

function ExchangeChart() {
  const prices = Array.from({ length: 21 }, (_, i) => 72000 - i * 200);
  return (
    <svg width="422" height="768" viewBox="0 0 422 768" className="shrink-0 overflow-visible" fontFamily={FONT}>
      <clipPath id="axis">
        <rect x="0" y="0" width="422" height="740.5" />
      </clipPath>
      <g transform="scale(.33333)">
        <g transform="translate(-210 0)">
          <Candles points={minutePoints} step={5.78} color="#565656" seed={41} spread={9} />
          <path d="M525 86V110M541 105V140M848 178V220M866 225V255M1036 300V338M345 155V175" stroke="#5e5e5e" strokeWidth="4" />
        </g>
        {series.map((s, i) => (
          <g key={i} transform={`translate(${s.shift} ${s.lift})`} opacity=".64">
            <path d={`M${30 - s.shift} ${s.base}h960`} stroke="#5c3546" strokeWidth="2" strokeDasharray="4 3" />
            <Bars base={s.base} width={4} opacity={0.75} bars={smallBars(30 - s.shift, 980 - s.shift, 5.78, 300 + i * 53, s.up, s.down, s.bias)} />
            <Bars base={s.base} width={4} bars={s.bars} />
          </g>
        ))}
        <g transform="translate(0 960)">
          <Bars base={1072} width={5} bars={liquidations} />
        </g>
      </g>
      <path d="M8 740.5H351.8V0" fill="none" stroke="#2c2c2c" />
      {exchangeTags.map((t) => (
        <Tag key={t.text} right={351.5} h={19.7} size={14} color="#f0dfe8" {...t} />
      ))}
      <g fontSize="13.8" fill="#a6a6a6" clipPath="url(#axis)">
        {prices.map((p, i) => (
          <text key={p} x="363" y={23 + i * 35.95} textLength={p > 70900 && p < 72000 ? 40 : 43} lengthAdjust="spacingAndGlyphs">
            {p.toFixed(1)}
          </text>
        ))}
      </g>
      <g fontSize="13.8" fontWeight="700" fill="#bdbdbd">
        <text x="77" y="762" textLength="32" lengthAdjust="spacingAndGlyphs">09:00</text>
        <text x="194" y="762" textLength="30" lengthAdjust="spacingAndGlyphs">10:00</text>
        <text x="311" y="762" textLength="27" lengthAdjust="spacingAndGlyphs">11:00</text>
      </g>
      <rect x="351.7" y="98" width="60.8" height="19.5" rx="2" fill="#fff" />
      <text x="363" y="112.6" fontSize="14" textLength="37.5" lengthAdjust="spacingAndGlyphs" fill="#2a2a2a">71497.6</text>
      {/* last price of the main chart, slightly wider than its axis */}
      <rect x="-66.5" y="72" width="68.5" height="22.5" rx="2" fill="#fff" />
      <text x="-54" y="88.6" fontSize="15.5" textLength="43" lengthAdjust="spacingAndGlyphs" fill="#2a2a2a">71497.6</text>
    </svg>
  );
}

function Stat({ label, labelWidth, value, valueWidth }: { label: string; labelWidth: number; value: string; valueWidth: number }) {
  return (
    <div className="flex h-[35px] shrink-0 items-center justify-between text-[#dedede]">
      <Fit text={label} w={labelWidth} className="text-[15px]" />
      <Fit text={value} w={valueWidth} className="text-[18px] font-black text-white" />
    </div>
  );
}

export default function App() {
  return (
    <div className="relative flex h-[768px] w-[1645px] overflow-hidden bg-[#171717]" style={{ fontFamily: FONT }}>
      {/* Spot trades */}
      <div className="relative flex h-full w-[205px] shrink-0 flex-col overflow-hidden">
        <div className="flex h-[25px] shrink-0 items-center bg-[#0f2b3f] pl-[108px] text-[15px] text-[#9fb0bb]">
          <Fit text="$" w={8} className="mr-0.5 font-black text-white" />
          <Fit text="48 K" w={25} />
          <div className="flex flex-1 justify-end pr-[9px] opacity-40">
            <Fit text="3s" w={13} />
          </div>
        </div>
        {spotTrades.map((trade, i) => (
          <TradeRow key={i} trade={trade} mono={false} />
        ))}
        <div className="h-[3px] shrink-0 bg-[#31051c]" />
        <div className="flex flex-col pt-1.5 pr-3 pl-[11px]">
          <Stat label="TRADES/m" labelWidth={61.5} value="4.61 K" valueWidth={40} />
          <div className="-mt-[3px]">
            <Stat label="VOLUME/m" labelWidth={63} value="1.5 M" valueWidth={32} />
          </div>
        </div>
        <div className="absolute inset-x-0 top-0 flex justify-between text-white">
          <div className="flex h-[21px] w-[95px] items-center gap-[3px] bg-black/75 pl-[3px] text-[17px]">
            <Fit text="Spot Trades" w={73} />
            <Pencil size={13} strokeWidth={2.4} />
          </div>
          <div className="flex h-[21px] w-[90px] items-center bg-black/70 pl-[3px]">
            <Gauge size={16} strokeWidth={2.4} className="mr-[7px] shrink-0" />
            <Search size={15} strokeWidth={2.6} className="mr-2 shrink-0" />
            <Settings size={16} strokeWidth={2.2} className="mr-[6px] shrink-0" />
            <EllipsisVertical size={17} strokeWidth={3.4} className="shrink-0" />
          </div>
        </div>
      </div>

      <MainChart />
      <ExchangeChart />

      {/* Perp trades */}
      <div className="flex h-full w-[203px] shrink-0 flex-col overflow-hidden">
        <div className="-mt-[0.8px] flex flex-col">
          {perpTrades.map((trade, i) => (
            <TradeRow key={i} trade={trade} mono />
          ))}
        </div>
        <div className="flex h-1 shrink-0 bg-[#2b62cf]">
          <div className="w-[60px] bg-[#58b5ee]" />
          <div className="w-[70px] bg-[#1f46c4]" />
          <div className="flex-1 bg-[#4ea3ea]" />
        </div>
        <div className="flex h-[97px] shrink-0 flex-col overflow-hidden pt-[8px] pr-[11px] pl-[13px]">
          <Stat label="TRADES/m" labelWidth={69.5} value="5.32 K" valueWidth={47.5} />
          <Stat label="VOLUME Δ/m" labelWidth={84} value="7.9 M" valueWidth={37.5} />
          <Stat label="1m LIQUIDATIONS/m" labelWidth={128} value="142.32" valueWidth={50} />
        </div>
        <div className="flex flex-col items-center pt-[37px] pl-px text-[19px] leading-[22px] text-[#7d7d7d]">
          <Fit text="Waiting for" w={84} />
          <Fit text="liquidations" w={89} />
          <Fit text="> 50 K" w={46} />
        </div>
        <div className="mt-[21px] ml-px flex h-[29px] w-[63px] shrink-0 items-center justify-center self-center rounded bg-[#3e5640] text-[17px] text-[#72906f]">
          <Fit text="BTCUSD" w={48.5} />
        </div>
      </div>

      <button className="absolute top-[701px] left-[1576px] flex h-[45px] w-[45px] items-center justify-center gap-[3px] rounded-full bg-[#688f64]">
        <span className="h-1 w-1 rounded-full bg-white" />
        <span className="h-1 w-1 rounded-full bg-white" />
        <span className="h-1 w-1 rounded-full bg-white" />
      </button>
      <div className="absolute inset-x-0 bottom-0 h-px bg-black" />
    </div>
  );
}
